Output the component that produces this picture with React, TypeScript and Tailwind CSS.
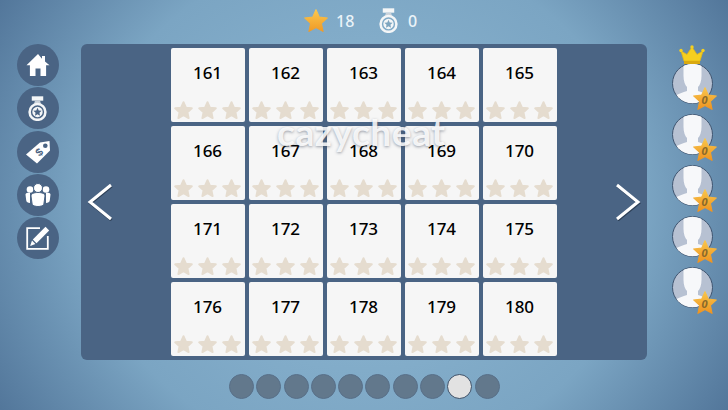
const STAR = "M12 1.500l3.100 6.900 7.400.8-5.500 5 1.500 7.400L12 18l-6.500 3.600L7 14.200l-5.500-5 7.400-.8z";

function Star({ size = 19, color = "#e5dccf" }: { size?: number; color?: string }) {
  return (
    <svg width={size} height={size} viewBox="0 0 24 24">
      <path d={STAR} fill={color} stroke={color} strokeWidth="2.400" strokeLinejoin="round" />
    </svg>
  );
}

function Medal({ size = 24, hole = "#4a6484" }: { size?: number; hole?: string }) {
  return (
    <svg width={size} height={size} viewBox="0 0 24 24">
      <rect x="6.500" y="0.300" width="11" height="4.200" fill="#f4f6f7" />
      <path d="M9.500 4.500h5l1 4h-7z" fill="#c9d2da" />
      <circle cx="12" cy="15.300" r="7.600" fill="none" stroke="#f4f6f7" strokeWidth="2.400" />
      <circle cx="12" cy="15.300" r="5" fill="#f4f6f7" />
      <path transform="translate(7.500 10.800) scale(0.375)" d={STAR} fill={hole} />
    </svg>
  );
}

function Home() {
  return (
    <svg width="24" height="24" viewBox="0 0 24 24">
      <path d="M12 1L.5 12.200h3.400V23h5.600v-7.500h5V23h5.600V12.200h3.400L19 8.600V3h-3v2.700z" fill="#fff" />
    </svg>
  );
}

function Tag() {
  return (
    <svg width="26" height="26" viewBox="0 0 26 26">
      <path d="M1 15.500L15 3.500l9.500-1.500 .5 9.500L12 24.500z" fill="#fff" />
      <circle cx="20.300" cy="6.800" r="2.300" fill="#4a6484" />
      <text x="11.800" y="19" fontSize="11" fontWeight="700" fill="#4a6484" fontFamily="Liberation Sans, sans-serif" transform="rotate(-42 12 15)">$</text>
    </svg>
  );
}

function Team() {
  return (
    <svg width="26" height="24" viewBox="0 0 26 24">
      <circle cx="5" cy="6.500" r="3.300" fill="#fff" />
      <circle cx="21" cy="6.500" r="3.300" fill="#fff" />
      <path d="M.5 11.500c0-1.500 1.500-1.800 4.500-1.800v10.300c-2 0-3.700-1-3.800-2.800zM25.500 11.500c0-1.500-1.500-1.800-4.500-1.800v10.300c2 0 3.700-1 3.800-2.800z" fill="#fff" />
      <circle cx="13" cy="5" r="4.500" fill="#fff" stroke="#4a6484" strokeWidth="1" />
      <path d="M6 13c0-2.500 3-3.500 7-3.500s7 1 7 3.500l-1.200 8.500c-1 1.300-3.300 2-5.800 2s-4.800-.7-5.800-2z" fill="#fff" stroke="#4a6484" strokeWidth="1" />
    </svg>
  );
}

function Edit() {
  return (
    <svg width="24" height="24" viewBox="0 0 24 24">
      <path d="M14 2.200H1.200v20.600h20.600V10" fill="none" stroke="#fff" strokeWidth="1.800" />
      <path d="M19.500.8l3.700 3.700L10.500 17.200l-3.700-3.700z" fill="#fff" />
      <path d="M6 14.600l3.400 3.400-5.300 1.900z" fill="#fff" />
    </svg>
  );
}

function Chevron({ dir }: { dir: "l" | "r" }) {
  const d = dir === "l" ? "M24 2L3 19l21 17" : "M2 2l21 17L2 36";
  return (
    <svg width="26" height="38" viewBox="0 0 26 38" className="shrink-0">
      <path d={d} transform="translate(0.600 1.200)" fill="none" stroke="#2d4058" strokeWidth="3" />
      <path d={d} fill="none" stroke="#fff" strokeWidth="3" />
    </svg>
  );
}

function Avatar({ crown }: { crown?: boolean }) {
  return (
    <div className="relative w-[41px] h-[41px]">
      <svg width="41" height="41" viewBox="0 0 41 41">
        <defs>
          <clipPath id="av"><circle cx="20.500" cy="20.500" r="19.800" /></clipPath>
        </defs>
        <circle cx="20.500" cy="20.500" r="20" fill="#b7c1d2" stroke="#3f5570" strokeWidth="1" />
        <g clipPath="url(#av)">
          <path d="M11.500 0h18v13c0 5-1.500 9-3.500 11v4c4 1.500 9 2.500 12 5v8H3v-8c3-2.500 8-3.500 12-5v-4c-2-2-3.500-6-3.500-11z" fill="#f7f8fa" />
        </g>
      </svg>
      {crown && (
        <svg width="26" height="20" viewBox="0 0 26 20" className="absolute left-[7px] -top-[18px]">
          <path d="M5 16L2 6l6 3.500L13 2l5 7.500L24 6l-3 10z" fill="#f5cf1f" stroke="#e6b714" strokeWidth="0.800" />
          <rect x="5" y="16" width="16" height="3" fill="#d9a90f" />
          <circle cx="2" cy="5.500" r="1.700" fill="#f5cf1f" />
          <circle cx="13" cy="2" r="1.700" fill="#f5cf1f" />
          <circle cx="24" cy="5.500" r="1.700" fill="#f5cf1f" />
        </svg>
      )}
      <div className="absolute left-[20px] top-[23px] w-[26px] h-[26px] flex items-center justify-center">
        <svg width="26" height="26" viewBox="0 0 24 24" className="absolute inset-0">
          <defs>
            <linearGradient id="gs" x1="0" y1="0" x2="0" y2="1">
              <stop offset="0" stopColor="#f9c64c" />
              <stop offset="1" stopColor="#ee9320" />
            </linearGradient>
          </defs>
          <path d={STAR} fill="url(#gs)" stroke="url(#gs)" strokeWidth="1" strokeLinejoin="round" />
        </svg>
        <span className="relative text-[11px] leading-none font-bold italic text-[#8b6a2a]">0</span>
      </div>
    </div>
  );
}

const levels = Array.from({ length: 20 }, (_, i) => 161 + i);
const buttons = [<Home />, <Medal size={25} />, <Tag />, <Team />, <Edit />];

export default function App() {
  return (
    <div
      className="relative w-[728px] h-[410px] overflow-hidden flex flex-col bg-[radial-gradient(ellipse_62%_100%_at_50%_50%,#8fb9d4_0%,#7ba5c3_62%,#4c6f94_100%)] text-[#eaf3f8]"
      style={{ fontFamily: '"Noto Sans", "Open Sans", sans-serif' }}
    >
      <div className="h-[44px] shrink-0 flex items-center pl-[303px] pb-[3px]">
        <svg width="26" height="26" viewBox="0 0 24 24">
          <defs>
            <linearGradient id="top" x1="0" y1="0" x2="0" y2="1">
              <stop offset="0" stopColor="#fbc84e" />
              <stop offset="1" stopColor="#f09a26" />
            </linearGradient>
          </defs>
          <path d={STAR} fill="url(#top)" stroke="url(#top)" strokeWidth="1" strokeLinejoin="round" />
        </svg>
        <span className="ml-[7px] w-[24px] text-[16px] font-medium">18</span>
        <span className="ml-[16px] flex"><Medal size={25} hole="#7ea5bf" /></span>
        <span className="ml-[7px] text-[16px] font-medium">0</span>
      </div>

      <div className="flex items-start h-[316px] shrink-0">
        <div className="w-[81px] shrink-0 flex flex-col items-center gap-[1.300px] pr-[6px]">
          {buttons.map((b, i) => (
            <div key={i} className="w-[42px] h-[42px] rounded-full bg-[#4a6484] flex items-center justify-center">
              {b}
            </div>
          ))}
        </div>

        <div className="w-[566px] h-[316px] shrink-0 rounded-md bg-[#4a6484] flex items-center justify-between px-[6px]">
          <Chevron dir="l" />
          <div className="grid grid-cols-5 gap-[4px] w-[386px] -ml-[1px]">
            {levels.map((n) => (
              <div key={n} className="h-[74px] rounded-[2px] bg-[#f6f6f6] flex flex-col items-center justify-between pt-[13px] pb-[2px]">
                <span className="text-[17px] leading-[24px] font-medium text-black">{n}</span>
                <div className="flex gap-[5px]">
                  <Star />
                  <Star />
                  <Star />
                </div>
              </div>
            ))}
          </div>
          <Chevron dir="r" />
        </div>

        <div className="flex-1 flex flex-col items-center gap-[10px] pt-[19px] pl-[9px]">
          <Avatar crown />
          <Avatar />
          <Avatar />
          <Avatar />
          <Avatar />
        </div>
      </div>

      <div className="flex-1 flex items-center pl-[229px] gap-[2.300px] pt-[2px]">
        {Array.from({ length: 10 }, (_, i) => (
          <div
            key={i}
            className={
              i === 8
                ? "w-[25px] h-[25px] rounded-full bg-[#e2e2e2] border border-[#3d5068]"
                : "w-[25px] h-[25px] rounded-full bg-[#62788c] border border-[#587089]"
            }
          />
        ))}
      </div>

      <div
        className="absolute left-[277px] top-[110px] text-[37px] leading-[44px] font-bold tracking-[0.6px] text-white/85 [text-shadow:0_1px_3px_rgba(60,70,90,0.5)]"
        style={{ fontFamily: "Lato, sans-serif" }}
      >
        cazycheat
      </div>
    </div>
  );
}
